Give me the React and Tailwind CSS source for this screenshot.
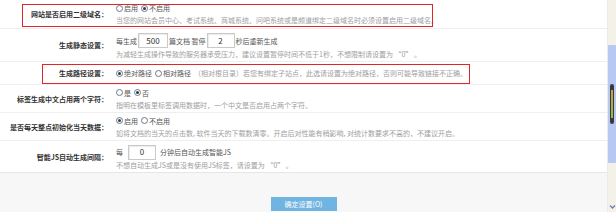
import React from "react";

const F = { fontFamily: '"Noto Sans CJK SC", "Noto Sans", sans-serif' };

function Radio({ checked, label }) {
  return (
    <span className="inline-flex items-center mr-[3px]">
      <span className="inline-flex items-center justify-center w-[7px] h-[7px] rounded-full border border-[#6a7a8c] bg-white mr-[1px]">
        {checked && <span className="w-[3px] h-[3px] rounded-full bg-[#2a3a4c]" />}
      </span>
      <span className="text-[#555]">{label}</span>
    </span>
  );
}

function Box({ v, w }) {
  return (
    <span
      className={`inline-flex items-center justify-center h-[15px] ${w} border border-[#c9c9c9] bg-white text-[#333] text-[8px] mx-[1px] shadow-[inset_1px_1px_1px_rgba(0,0,0,0.08)]`}
    >
      {v}
    </span>
  );
}

function Row({ label, h, children, last }) {
  return (
    <div className={`flex items-center ${h} ${last ? "" : "border-b border-[#efefef]"}`}>
      <div className="w-[108px] shrink-0 text-right font-bold text-[#333] text-[7px]">{label}</div>
      <div className="ml-[8px] flex flex-col">{children}</div>
    </div>
  );
}

export default function App() {
  return (
    <div className="relative w-[616px] h-[212px] flex overflow-hidden bg-[#f7f7f7] text-[7px] leading-[12px]" style={F}>
      <div className="flex-1 flex flex-col">
        <div className="bg-white border-b border-[#e6e6e6] flex flex-col">
          <Row label="网站是否启用二级域名：" h="h-[29px]">
            <div className="flex items-center h-[12px]">
              <Radio label="启用" />
              <Radio checked label="不启用" />
            </div>
            <div className="text-[#a0a0a0] h-[12px]">
              当您的网站会员中心、考试系统、商城系统、问吧系统或是频道绑定二级域名时必须设置启用二级域名。
            </div>
          </Row>
          <Row label="生成静态设置：" h="h-[33px]">
            <div className="flex items-center h-[16px] mt-[2px] text-[#555]">
              <span>每生成</span>
              <Box v="500" w="w-[30px]" />
              <span>篇文档 暂停</span>
              <Box v="2" w="w-[28px]" />
              <span>秒后重新生成</span>
            </div>
            <div className="text-[#a0a0a0] h-[11px] leading-[11px]">
              为减轻生成操作导致的服务器承受压力，建议设置暂停时间不低于1秒，不想限制请设置为 “0” 。
            </div>
          </Row>
          <Row label="生成路径设置：" h="h-[23px]">
            <div className="flex items-center h-[12px]">
              <Radio checked label="绝对路径" />
              <Radio label="相对路径" />
              <span className="text-[#a0a0a0]">
                （相对根目录）若您有绑定子站点，此选请设置为绝对路径，否则可能导致链接不正确。
              </span>
            </div>
          </Row>
          <Row label="标签生成中文占用两个字符：" h="h-[28px]">
            <div className="flex items-center h-[12px]">
              <Radio label="是" />
              <Radio checked label="否" />
            </div>
            <div className="text-[#a0a0a0] h-[12px]">
              指明在模板里标签调用数据时，一个中文是否启用占两个字符。
            </div>
          </Row>
          <Row label="是否每天整点初始化当天数据：" h="h-[28px]">
            <div className="flex items-center h-[12px]">
              <Radio checked label="启用" />
              <Radio label="不启用" />
            </div>
            <div className="text-[#a0a0a0] h-[12px]">
              如将文档的当天的点击数, 软件当天的下载数清零。开启后对性能有稍影响, 对统计数要求不高的，不建议开启。
            </div>
          </Row>
          <Row label="智能JS自动生成间隔：" h="h-[31px]" last>
            <div className="flex items-center h-[15px] mt-[2px] text-[#555]">
              <span className="mr-[4px]">每</span>
              <Box v="0" w="w-[28px]" />
              <span className="ml-[3px]">分钟后自动生成智能JS</span>
            </div>
            <div className="text-[#a0a0a0] h-[11px] leading-[11px]">
              不想自动生成JS或是没有使用JS标签，请设置为 “0” 。
            </div>
          </Row>
        </div>
        <div className="flex-1 flex items-end justify-center pb-[1px]">
          <button className="w-[66px] h-[14px] mb-[0px] bg-[#70b4e2] text-white text-[7px] leading-[14px]" style={F}>
            确定设置(O)
          </button>
        </div>
      </div>
      <div className="w-[9px] shrink-0 bg-[#f3f1e8] border-l border-[#ecebe4] flex flex-col items-center relative">
        <div className="mt-[45px] w-[8px] h-[118px] bg-[#b7c8f2] rounded-[1px] flex items-center justify-center">
          <div className="w-[4px] h-[40px] rounded-[2px] bg-[#3a3a3a] flex justify-center py-[6px]">
            <div className="w-[2px] h-full bg-gradient-to-b from-[#c9a040] to-[#8cc040]" />
          </div>
        </div>
        <div className="flex-1" />
        <svg width="7" height="6" viewBox="0 0 7 6" className="mb-[2px]">
          <path d="M1 1.5 L3.5 4 L6 1.5" stroke="#6b80b0" strokeWidth="1.3" fill="none" />
        </svg>
      </div>
      <div className="absolute left-[22px] top-[4px] w-[411px] h-[23px] border border-[#e0262b]" />
      <div className="absolute left-[42px] top-[64px] w-[428px] h-[20px] border border-[#e0262b]" />
    </div>
  );
}
